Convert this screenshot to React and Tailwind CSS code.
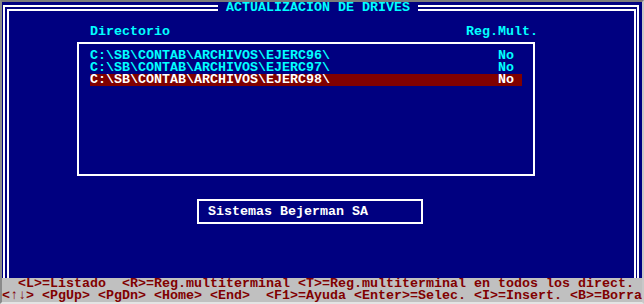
const mono = { fontFamily: '"Liberation Mono", "DejaVu Sans Mono", monospace' };

const rows = [
  { path: "C:\\SB\\CONTAB\\ARCHIVOS\\EJERC96\\", reg: "No" },
  { path: "C:\\SB\\CONTAB\\ARCHIVOS\\EJERC97\\", reg: "No" },
  { path: "C:\\SB\\CONTAB\\ARCHIVOS\\EJERC98\\", reg: "No", selected: true },
];

// cada tecla ocupa su celda fija de 8px, como en modo texto
const keysTop = [
  [2, ""],
  [11, "<L>=Listado"],
  [2, ""],
  [21, "<R>=Reg.multiterminal"],
  [1, ""],
  [42, "<T>=Reg.multiterminal en todos los direct."],
];
const keysBottom = [
  [4, "<↑↓>"],
  [1, ""],
  [6, "<PgUp>"],
  [1, ""],
  [6, "<PgDn>"],
  [1, ""],
  [6, "<Home>"],
  [1, ""],
  [5, "<End>"],
  [2, ""],
  [10, "<F1>=Ayuda"],
  [1, ""],
  [14, "<Enter>=Selec."],
  [1, ""],
  [11, "<I>=Insert."],
  [1, ""],
  [9, "<B>=Borra"],
];

function KeyRow({ items }) {
  return (
    <div className="h-[12px] flex">
      {items.map(([cells, text], i) => (
        <span key={i} className="shrink-0" style={{ width: cells * 8 }}>
          {text}
        </span>
      ))}
    </div>
  );
}

function DriveRow({ path, reg, selected }) {
  return (
    <div
      className={
        "flex h-[12px] w-[432px] " +
        (selected ? "bg-[#800000] text-white" : "text-[#00ffff]")
      }
    >
      <span className="w-[408px]">{path}</span>
      <span>{reg}</span>
    </div>
  );
}

export default function App() {
  return (
    <div
      style={mono}
      className="w-[644px] h-[304px] overflow-hidden flex flex-col border-t-2 border-l-2 border-t-[#7a7a7a] border-l-[#8a8a8a] border-r-2 border-r-[#c8c8c8] border-b-2 border-b-[#e4e4e4] text-[13.333px] leading-[12px] font-bold whitespace-pre"
    >
      {/* pantalla azul */}
      <div className="h-[276px] bg-[#000080] flex flex-col pt-[3px] pl-[1px] pr-[3px]">
        <div className="relative flex-1 border-double border-white border-t-[6px] border-l-[6px] border-r-[5px] border-b-0 flex flex-col">
          <div className="absolute left-[209px] top-[-9px] h-[12px] bg-[#000080] text-[#00ffff]">
            {" ACTUALIZACION DE DRIVES "}
          </div>

          <div className="mt-[15px] flex h-[12px] pl-[81px] text-[#00ffff]">
            <span className="w-[376px]">Directorio</span>
            <span>Reg.Mult.</span>
          </div>

          <div className="mt-[4px] ml-[68px] w-[458px] h-[134px] border-2 border-white pt-[6px] pl-[11px] flex flex-col">
            {rows.map((r) => (
              <DriveRow key={r.path} {...r} />
            ))}
          </div>

          <div className="mt-[23px] ml-[188px] w-[226px] h-[25px] border-2 border-white pt-[5px] pl-[9px] text-white">
            Sistemas Bejerman SA
          </div>
        </div>
      </div>

      {/* barra de teclas */}
      <div className="h-[24px] bg-[#c0c0c0] text-[#800000] flex flex-col">
        <KeyRow items={keysTop} />
        <KeyRow items={keysBottom} />
      </div>
    </div>
  );
}
